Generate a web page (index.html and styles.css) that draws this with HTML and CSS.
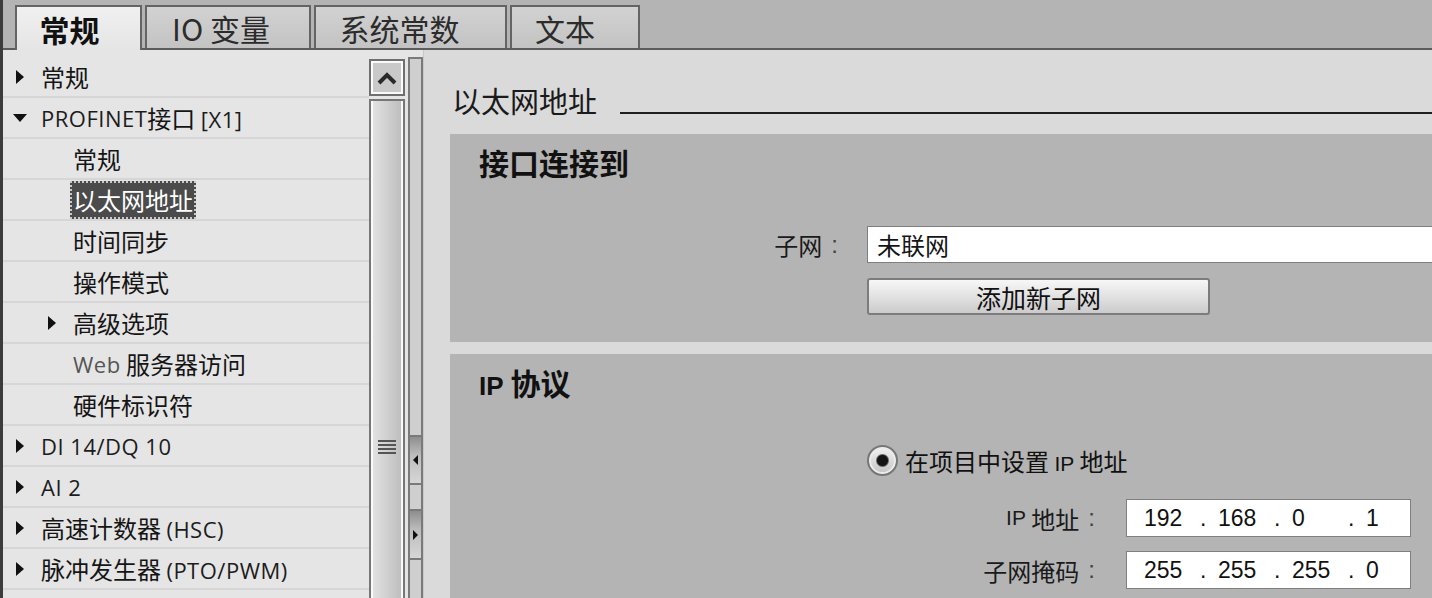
FILE: index.html
```html
<!DOCTYPE html>
<html lang="zh-CN">
<head>
<meta charset="utf-8">
<title>属性 - 以太网地址</title>
<link rel="stylesheet" href="styles.css">
</head>
<body>
<div class="app">
  <div class="tabbar">
    <div class="tab tab-active t1">常规</div>
    <div class="tab t2">IO 变量</div>
    <div class="tab t3">系统常数</div>
    <div class="tab t4">文本</div>
  </div>
  <div class="main">
    <div class="tree">
      <div class="row lv1"><span class="tw"><i class="tri-r"></i></span><span>常规</span></div>
      <div class="row lv1"><span class="tw"><i class="tri-d"></i></span><span class="latin">PROFINET</span><span>接口 <span class="latin">[X1]</span></span></div>
      <div class="row lv2n">常规</div>
      <div class="row lv2n"><span class="sel">以太网地址</span></div>
      <div class="row lv2n">时间同步</div>
      <div class="row lv2n">操作模式</div>
      <div class="row lv2"><span class="tw"><i class="tri-r"></i></span><span>高级选项</span></div>
      <div class="row lv2n"><span class="latin web">Web</span>&nbsp;服务器访问</div>
      <div class="row lv2n">硬件标识符</div>
      <div class="row lv1"><span class="tw"><i class="tri-r"></i></span><span class="latin">DI 14/DQ 10</span></div>
      <div class="row lv1"><span class="tw"><i class="tri-r"></i></span><span class="latin">AI 2</span></div>
      <div class="row lv1"><span class="tw"><i class="tri-r"></i></span><span>高速计数器 <span class="latin">(HSC)</span></span></div>
      <div class="row lv1"><span class="tw"><i class="tri-r"></i></span><span>脉冲发生器 <span class="latin">(PTO/PWM)</span></span></div>
      <div class="row lv1"></div>
    </div>
    <div class="vscroll">
      <div class="sbtn">
        <svg width="20" height="14" viewBox="0 0 20 14"><polyline points="2,12 10,4 18,12" fill="none" stroke="#2a2a2a" stroke-width="4"/></svg>
      </div>
      <div class="thumb"><div class="grip"></div></div>
    </div>
    <div class="splitter">
      <div class="sp-top"></div>
      <div class="sp-btn b1"><i class="tri-ls"></i></div>
      <div class="sp-mid"></div>
      <div class="sp-btn b2"><i class="tri-rs"></i></div>
      <div class="sp-rest"></div>
    </div>
    <div class="content">
      <div class="heading">
        <span class="heading-text">以太网地址</span>
        <span class="heading-line"></span>
      </div>
      <div class="section s1">
        <div class="sec-title">接口连接到</div>
        <div class="form1">
          <div class="f-label">子网<span class="colon">:</span></div>
          <div class="text-input">未联网</div>
          <div class="button">添加新子网</div>
        </div>
      </div>
      <div class="section s2">
        <div class="sec-title"><span class="latin-b">IP</span> 协议</div>
        <div class="radio-row">
          <span class="radio"></span>
          <span class="radio-label">在项目中设置 <span class="latin-s">IP</span> 地址</span>
        </div>
        <div class="ip-grid">
          <div class="ip-label"><span class="latin-s">IP</span>&nbsp;地址<span class="colon">:</span></div>
          <div class="ip-input"><span class="seg">192</span><span class="dot">.</span><span class="seg">168</span><span class="dot">.</span><span class="seg">0</span><span class="dot">.</span><span class="seg">1</span></div>
          <div class="ip-label">子网掩码<span class="colon">:</span></div>
          <div class="ip-input"><span class="seg">255</span><span class="dot">.</span><span class="seg">255</span><span class="dot">.</span><span class="seg">255</span><span class="dot">.</span><span class="seg">0</span></div>
        </div>
      </div>
    </div>
  </div>
</div>
</body>
</html>
```

FILE: styles.css
```css
* { box-sizing: border-box; margin: 0; padding: 0; }
html, body { width: 1432px; height: 598px; overflow: hidden; }
body {
  font-family: "Noto Sans CJK SC", "Noto Sans", sans-serif;
  color: #151515;
  background: #e5e5e5;
}
.app {
  height: 598px;
  display: flex;
  flex-direction: column;
  border-left: 3px solid #3c3c3c;
}

/* tabs */
.tabbar {
  flex: none;
  height: 50px;
  display: flex;
  align-items: flex-end;
  gap: 3px;
  padding-left: 12px;
  background: #b4b4b4;
  border-bottom: 2px solid #5c5c5c;
}
.tab {
  height: 43px;
  display: flex;
  align-items: center;
  justify-content: center;
  font-size: 30px;
  line-height: 1;
  color: #2c2c2c;
  border: 2px solid #646464;
  border-bottom: none;
  background: linear-gradient(#d2d2d2, #c3c3c3);
}
.tab-active {
  height: 45px;
  margin-bottom: -2px;
  font-weight: 700;
  color: #111;
  background: linear-gradient(#f0f0f0, #e5e5e5);
}
.t1 { width: 127px; padding-right: 18px; }
.t2 { width: 166px; padding-right: 14px; }
.t3 { width: 193px; padding-right: 22px; }
.t4 { width: 130px; padding-right: 20px; }

/* main area */
.main { flex: 1; display: flex; min-height: 0; }

.tree {
  width: 366px;
  flex: none;
  padding-top: 7px;
  background: #e5e5e5;
  overflow: hidden;
}
.row {
  height: 41px;
  display: flex;
  align-items: center;
  border-bottom: 2px solid #d6d6d6;
  font-size: 24px;
  white-space: nowrap;
}
.lv1 { padding-left: 13px; }
.lv2 { padding-left: 45px; }
.lv2n { padding-left: 70px; }
.tw { width: 25px; flex: none; display: flex; align-items: center; }
.latin { font-family: "Open Sans", "Noto Sans", sans-serif; font-size: 22px; color: #1c1c1c; letter-spacing: 0.5px; }
.web { color: #555; }
.tri-r {
  display: block; width: 0; height: 0;
  border-top: 7px solid transparent;
  border-bottom: 7px solid transparent;
  border-left: 8px solid #111;
}
.tri-d {
  display: block; width: 0; height: 0; margin-left: -3px;
  border-left: 7px solid transparent;
  border-right: 7px solid transparent;
  border-top: 8px solid #111;
}
.sel {
  margin-left: -3px;
  padding: 0 3px;
  height: 38px;
  line-height: 38px;
  background: #4b4b4b;
  color: #fff;
  outline: 2px dotted #c8c8c8;
  outline-offset: -2px;
}

/* vertical scrollbar */
.vscroll {
  width: 39px;
  flex: none;
  display: flex;
  flex-direction: column;
  padding: 9px 3px 0 0;
  background: #e5e5e5;
}
.sbtn {
  height: 37px;
  flex: none;
  border: 2px solid #6f6f6f;
  box-shadow: inset 0 0 0 2px #fafafa;
  background: #c9c9c9;
  display: flex;
  align-items: center;
  justify-content: center;
}
.thumb {
  flex: 1;
  margin-top: 3px;
  padding-top: 339px;
  border: 2px solid #777;
  border-bottom: none;
  box-shadow: inset 2px 0 0 #fafafa, inset -2px 0 0 #fafafa;
  background: linear-gradient(to right, #e4e4e4, #bcbcbc);
}
.grip {
  width: 18px;
  height: 16px;
  margin: 0 auto;
  background: repeating-linear-gradient(#555 0 2px, transparent 2px 4px);
}

/* splitter */
.splitter {
  width: 15px;
  flex: none;
  margin-top: 7px;
  display: flex;
  flex-direction: column;
  border: 2px solid #7a7a7a;
  border-bottom: none;
  background: #cfcfcf;
}
.sp-top { height: 376px; flex: none; }
.sp-mid { height: 24px; flex: none; }
.sp-rest { flex: 1; }
.sp-btn {
  flex: none;
  display: flex;
  align-items: center;
  justify-content: center;
  border-top: 2px solid #7a7a7a;
  border-bottom: 2px solid #7a7a7a;
  background: linear-gradient(#8e8e8e, #bdbdbd 40%, #d6d6d6);
}
.b1 { height: 50px; }
.b2 { height: 51px; }
.tri-ls {
  display: block; width: 0; height: 0;
  border-top: 5px solid transparent;
  border-bottom: 5px solid transparent;
  border-right: 5px solid #111;
}
.tri-rs {
  display: block; width: 0; height: 0;
  border-top: 5px solid transparent;
  border-bottom: 5px solid transparent;
  border-left: 5px solid #111;
}

/* content */
.content {
  flex: 1;
  min-width: 0;
  display: flex;
  flex-direction: column;
  padding-left: 26px;
  background: #dadada;
  border-left: 1px solid #c8c8c8;
}
.heading {
  flex: none;
  height: 84px;
  padding: 32px 0 0 2px;
  display: flex;
  align-items: flex-start;
}
.heading-text { font-size: 29px; line-height: 36px; font-weight: 400; color: #1a1a1a; }
.heading-line { flex: 1; height: 2px; margin: 30px 0 0 23px; background: #1e1e1e; }

.section { background: #b4b4b4; overflow: hidden; }
.s1 { flex: none; height: 208px; }
.s2 { flex: 1; margin-top: 12px; }
.sec-title {
  padding: 10px 0 0 29px;
  font-size: 30px;
  line-height: 36px;
  font-weight: 700;
  color: #111;
}
.latin-b { font-family: "Liberation Sans", "Noto Sans", sans-serif; font-size: 26px; font-weight: 700; }
.latin-s { font-family: "Liberation Sans", "Noto Sans", sans-serif; font-size: 21px; }

.form1 {
  display: grid;
  grid-template-columns: 417px 1fr;
  row-gap: 15px;
  margin-top: 46px;
}
.f-label {
  display: flex;
  align-items: center;
  justify-content: flex-end;
  padding-right: 29px;
  font-size: 24px;
  color: #1a1a1a;
}
.colon { margin-left: 9px; font-family: "Liberation Sans", sans-serif; color: #444; }
.text-input {
  height: 37px;
  display: flex;
  align-items: center;
  padding-left: 9px;
  font-size: 24px;
  background: #fff;
  border: 1px solid #7f7f7f;
  border-right: none;
}
.button {
  grid-column: 2;
  width: 343px;
  height: 37px;
  display: flex;
  align-items: center;
  justify-content: center;
  font-size: 25px;
  color: #111;
  border: 2px solid #7c7c7c;
  border-radius: 3px;
  background: linear-gradient(#f7f7f7, #e4e4e4 45%, #cbcbcb);
}

.radio-row {
  margin: 41px 0 0 417px;
  height: 31px;
  display: flex;
  align-items: center;
}
.radio {
  width: 31px;
  height: 31px;
  flex: none;
  border-radius: 50%;
  border: 2px solid #777;
  box-shadow: inset 0 0 0 2px #ececec;
  background: radial-gradient(circle, #151515 0 5px, #3a3a3a 5.5px, transparent 7px), linear-gradient(#f2f2f2, #c4c4c4);
}
.radio-label { margin-left: 7px; font-size: 24px; color: #111; }

.ip-grid {
  display: grid;
  grid-template-columns: 259px 285px;
  row-gap: 14px;
  margin: 23px 0 0 417px;
}
.ip-label {
  display: flex;
  align-items: center;
  justify-content: flex-end;
  padding-right: 31px;
  font-size: 24px;
  color: #1a1a1a;
}
.ip-input {
  height: 38px;
  display: flex;
  align-items: center;
  padding-left: 17px;
  font-family: "Liberation Sans", "Noto Sans", sans-serif;
  font-size: 23px;
  color: #111;
  background: #fff;
  border: 1px solid #7f7f7f;
}
.seg { width: 56px; flex: none; }
.dot { width: 18px; flex: none; }
```
